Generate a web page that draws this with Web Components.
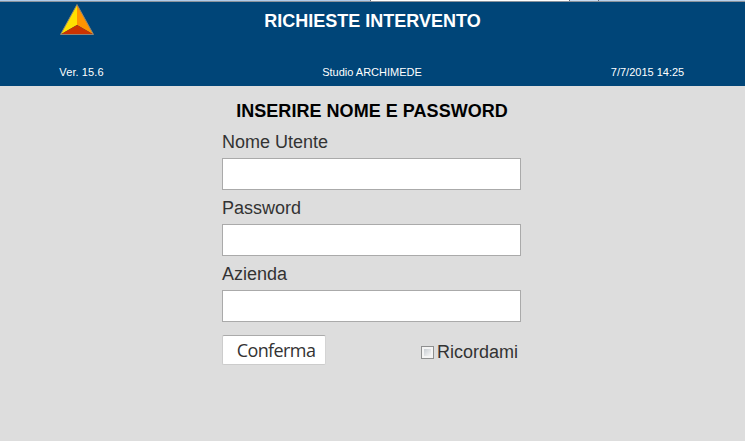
<!DOCTYPE html>
<html lang="it">
<head>
<meta charset="utf-8">
<title>Richieste Intervento</title>
<style>
  body {
    margin: 0;
    height: 441px;
    overflow: hidden;
    background: #ddd;
    color: #333;
    font-family: "Liberation Sans", Arial, sans-serif;
  }
</style>
</head>
<body>

<login-page>
  <window-edge></window-edge>
  <app-header>
    <app-logo slot="logo"></app-logo>
    <span slot="title">RICHIESTE INTERVENTO</span>
    <span slot="version">Ver. 15.6</span>
    <span slot="studio">Studio ARCHIMEDE</span>
    <span slot="date">7/7/2015 14:25</span>
  </app-header>
  <login-form>
    <span slot="heading">INSERIRE NOME E PASSWORD</span>
    <text-field>Nome Utente</text-field>
    <text-field type="password">Password</text-field>
    <text-field>Azienda</text-field>
    <confirm-button slot="actions">Conferma</confirm-button>
    <check-field slot="actions">Ricordami</check-field>
  </login-form>
</login-page>

<script>
customElements.define("login-page", class extends HTMLElement {
  connectedCallback() {
    this.attachShadow({mode: "open"});
    this.shadowRoot.innerHTML = `
    <style>
      :host {
        display: flex;
        flex-direction: column;
        align-items: stretch;
      }
    </style>
    <slot></slot>
    `
  }
})

// thin line of tabs over the header
customElements.define("window-edge", class extends HTMLElement {
  connectedCallback() {
    this.attachShadow({mode: "open"});
    this.shadowRoot.innerHTML = `
    <style>
      :host {
        display: block;
        box-sizing: border-box;
        height: 2px;
        border-bottom: 1px solid #8b939c;
        background: linear-gradient(to right,
          #b0cbe9 370px, #66707c 370px 371px, #fff 371px 569px,
          #66707c 569px 570px, #c9dcf2 570px 598px, #66707c 598px 599px, #b9d1ec 599px);
      }
    </style>
    `
  }
})

customElements.define("app-header", class extends HTMLElement {
  connectedCallback() {
    this.attachShadow({mode: "open"});
    this.shadowRoot.innerHTML = `
    <style>
      :host {
        display: grid;
        grid-template-columns: 163px 1fr 163px;
        grid-template-rows: 56px 28px;
        box-sizing: border-box;
        height: 84px;
        background: #004578;
        color: #fff;
        font-size: 11px;
        text-align: center;
      }
      h1 {
        margin: 0;
        padding-top: 9px;
        font-size: 18px;
        line-height: 21px;
        white-space: nowrap;
      }
      .logo {
        padding: 0 0 0 59px;
        text-align: left;
      }
      .info {
        padding-top: 8px;
        padding-right: 1px;
        line-height: 13px;
      }
      .date {
        padding-left: 8px;
        padding-right: 40px;
      }
      .version {
        grid-column: 1;
        padding-right: 0;
        letter-spacing: 0.1px;
      }
    </style>
    <div class="logo"><slot name="logo"></slot></div>
    <h1><slot name="title"></slot></h1>
    <div class="info version"><slot name="version"></slot></div>
    <div class="info"><slot name="studio"></slot></div>
    <div class="info date"><slot name="date"></slot></div>
    `
  }
})

customElements.define("app-logo", class extends HTMLElement {
  connectedCallback() {
    this.attachShadow({mode: "open"});
    this.shadowRoot.innerHTML = `
    <style>
      :host { display: block; }
      svg { display: block; }
    </style>
    <svg width="36" height="34" viewBox="0 0 36 34">
      <path d="M18 2.5 L1.5 32.5 L18 23 Z" fill="#ffe000"/>
      <path d="M18 2.5 L34.5 32.5 L18 23 Z" fill="#ff9400"/>
      <path d="M1.5 32.5 L18 23 L34.5 32.5 Z" fill="#cc3300"/>
      <path d="M18 2.5 L34.5 32.5 H1.5 Z" fill="none" stroke="#8d8577" stroke-width="1" stroke-linejoin="round"/>
    </svg>
    `
  }
})

customElements.define("login-form", class extends HTMLElement {
  connectedCallback() {
    this.attachShadow({mode: "open"});
    this.shadowRoot.innerHTML = `
    <style>
      :host {
        display: block;
        width: 299px;
        margin: 0 auto 0 222px;
        padding-top: 14px;
        font-size: 18px;
      }
      h2 {
        margin: 0 -1px 9px 0;
        color: #000;
        font-size: 18px;
        line-height: 22px;
        letter-spacing: 0.04px;
        text-align: center;
        white-space: nowrap;
      }
      .actions {
        display: flex;
        justify-content: space-between;
        align-items: flex-start;
        padding-top: 6px;
      }
    </style>
    <h2><slot name="heading"></slot></h2>
    <slot></slot>
    <div class="actions"><slot name="actions"></slot></div>
    `
  }
})

customElements.define("text-field", class extends HTMLElement {
  connectedCallback() {
    this.attachShadow({mode: "open"});
    const type = this.getAttribute("type") || "text"
    this.shadowRoot.innerHTML = `
    <style>
      :host {
        display: block;
        height: 66px;
      }
      label {
        display: block;
        height: 27px;
        line-height: 22px;
      }
      input {
        display: block;
        box-sizing: border-box;
        width: 100%;
        height: 32px;
        margin: 0;
        padding: 4px 6px;
        border: 1px solid #aaa;
        border-radius: 0;
        background: #fff;
        font: inherit;
      }
    </style>
    <label for="field"><slot></slot></label>
    <input id="field" type="${type}">
    `
  }
})

customElements.define("confirm-button", class extends HTMLElement {
  connectedCallback() {
    this.attachShadow({mode: "open"});
    this.shadowRoot.innerHTML = `
    <style>
      :host { display: block; }
      button {
        display: block;
        box-sizing: border-box;
        width: 104px;
        height: 30px;
        margin: 0;
        padding: 0 0 0 4px;
        border: 1px solid #ccc;
        border-top-color: #aaa;
        border-right-color: #d4d4d4;
        border-radius: 2px;
        background: #fff;
        color: #333;
        font: 18px/28px "Open Sans", "Noto Sans", sans-serif;
        letter-spacing: -0.6px;
      }
    </style>
    <button type="button"><slot></slot></button>
    `
  }
})

customElements.define("check-field", class extends HTMLElement {
  connectedCallback() {
    this.attachShadow({mode: "open"});
    this.shadowRoot.innerHTML = `
    <style>
      :host { display: block; }
      label {
        display: flex;
        align-items: center;
        gap: 3px;
        padding: 6px 3px 0 0;
        line-height: 22px;
      }
      input {
        appearance: none;
        box-sizing: border-box;
        width: 13px;
        height: 13px;
        margin: 0;
        border: 1px solid #8e8f8f;
        background: linear-gradient(135deg, #c8cdd2, #f6f6f6) content-box, #f4f4f4;
        padding: 2px;
      }
    </style>
    <label><input type="checkbox"><slot></slot></label>
    `
  }
})
</script>
</body>
</html>
